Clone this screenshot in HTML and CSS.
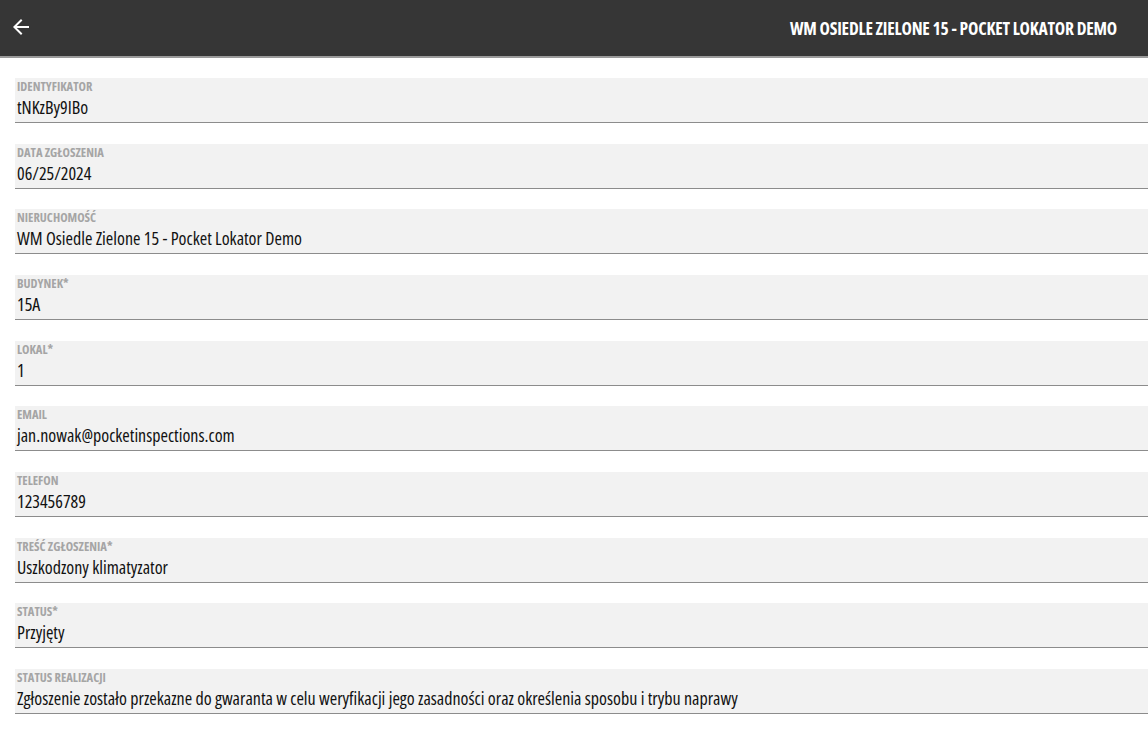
FILE: index.html
```html
<!DOCTYPE html>
<html lang="pl">
<head>
    <meta charset="UTF-8">
    <meta name="viewport" content="width=device-width, initial-scale=1.0">
    <title>Zgłoszenie</title>
    <link rel="stylesheet" href="styles.css">
</head>
<body>

    <div class="toolbar">
        <button class="back-btn" aria-label="Wstecz">
            <svg width="24" height="24" viewBox="0 0 24 24">
                <path d="M20 11H7.83l5.59-5.59L12 4l-8 8 8 8 1.41-1.41L7.83 13H20v-2z" fill="#fff"/>
            </svg>
        </button>
        <h1 class="toolbar-title">WM OSIEDLE ZIELONE 15 - POCKET LOKATOR DEMO</h1>
    </div>

    <div class="form">
        <div class="field">
            <label class="field-label">IDENTYFIKATOR</label>
            <div class="field-value">tNKzBy9IBo</div>
        </div>
        <div class="field">
            <label class="field-label">DATA ZGŁOSZENIA</label>
            <div class="field-value">06/25/2024</div>
        </div>
        <div class="field">
            <label class="field-label">NIERUCHOMOŚĆ</label>
            <div class="field-value">WM Osiedle Zielone 15 - Pocket Lokator Demo</div>
        </div>
        <div class="field">
            <label class="field-label">BUDYNEK*</label>
            <div class="field-value">15A</div>
        </div>
        <div class="field">
            <label class="field-label">LOKAL*</label>
            <div class="field-value">1</div>
        </div>
        <div class="field">
            <label class="field-label">EMAIL</label>
            <div class="field-value">jan.nowak@pocketinspections.com</div>
        </div>
        <div class="field">
            <label class="field-label">TELEFON</label>
            <div class="field-value">123456789</div>
        </div>
        <div class="field">
            <label class="field-label">TREŚĆ ZGŁOSZENIA*</label>
            <div class="field-value">Uszkodzony klimatyzator</div>
        </div>
        <div class="field">
            <label class="field-label">STATUS*</label>
            <div class="field-value">Przyjęty</div>
        </div>
        <div class="field">
            <label class="field-label">STATUS REALIZACJI</label>
            <div class="field-value">Zgłoszenie zostało przekazne do gwaranta w celu weryfikacji jego zasadności oraz określenia sposobu i trybu naprawy</div>
        </div>
    </div>

</body>
</html>
```

FILE: styles.css
```css
body {
    margin: 0;
    background-color: #fff;
    font-family: 'Open Sans', 'DejaVu Sans Condensed', sans-serif;
    font-stretch: condensed;
    color: #111;
    overflow: hidden;
}

.toolbar {
    height: 56px;
    background-color: #363636;
    border-bottom: 2px solid #9a9a9a;
    display: flex;
    align-items: center;
    justify-content: space-between;
    padding: 0 31px 0 9px;
}

.back-btn {
    background: none;
    border: none;
    padding: 0;
    margin-top: -3px;
    width: 24px;
    height: 24px;
    display: flex;
    align-items: center;
    justify-content: center;
    cursor: pointer;
}

.toolbar-title {
    margin: 0;
    color: #fff;
    font-size: 17.5px;
    font-weight: 700;
    letter-spacing: -0.2px;
    font-stretch: condensed;
}

.form {
    padding-top: 20px;
}

.field {
    margin-left: 15px;
    height: 44px;
    margin-bottom: 20.67px;
    background-color: #f2f2f2;
    border-bottom: 1px solid #8c8c8c;
    padding: 0 2px;
}

.field-label {
    display: block;
    padding-top: 2px;
    font-size: 12.5px;
    line-height: 13px;
    font-weight: 700;
    color: #a5a5a5;
}

.field-value {
    margin-top: 2px;
    font-size: 18px;
    line-height: 24px;
    font-weight: 500;
    color: #111;
}
```
